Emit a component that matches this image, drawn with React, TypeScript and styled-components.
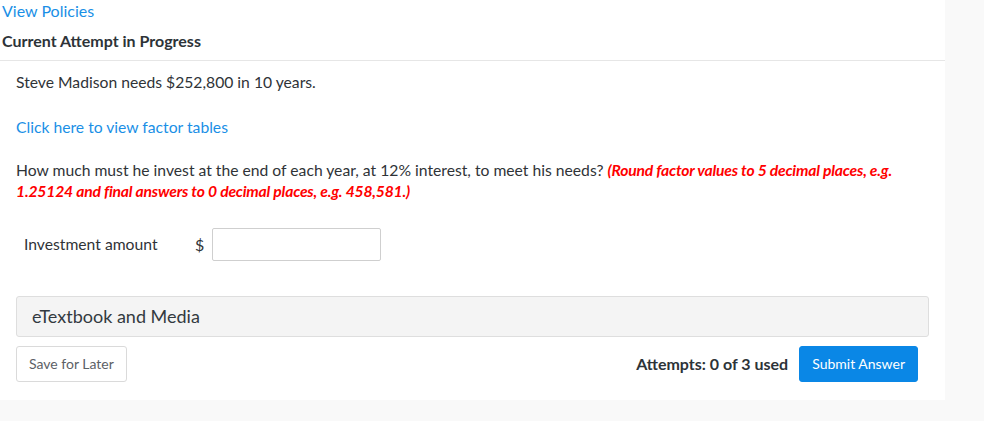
import * as React from 'react';
import styled, { createGlobalStyle } from 'styled-components';

const GlobalStyle = createGlobalStyle`
  html, body {
    margin: 0;
    padding: 0;
    background: #f9f9f9;
    font-family: Lato, "Open Sans", "Liberation Sans", sans-serif;
    color: #2f3337;
  }
`;

const Panel = styled.div`
  width: 945px;
  background: #ffffff;
  padding-bottom: 18px;
`;

const Header = styled.div`
  padding: 0 0 8px 2px;
  border-bottom: 1px solid #e6e6e6;
`;

const Link = styled.a`
  color: #1a8fe6;
  font-size: 15.7px;
  line-height: 22px;
  text-decoration: none;
  cursor: pointer;
`;

const TopLink = styled(Link)`
  display: block;
  font-size: 16px;
`;

const Heading = styled.h2`
  margin: 8px 0 0 0;
  font-size: 16px;
  font-weight: 700;
  line-height: 22px;
  color: #2d3338;
`;

const Body = styled.div`
  padding: 11px 16px 0 16px;
`;

const Para = styled.p`
  margin: 0 0 22.5px 0;
  font-size: 15.7px;
  line-height: 21px;
`;

const Hint = styled.span`
  color: #ff0000;
  font-weight: 700;
  font-style: italic;
  letter-spacing: -0.2px;
`;

const FieldRow = styled.div`
  display: flex;
  align-items: center;
  padding: 3px 0 0 8px;
  height: 33px;
`;

const Label = styled.label`
  font-size: 15.7px;
  width: 171px;
`;

const Currency = styled.span`
  font-size: 16px;
  width: 17px;
`;

const Input = styled.input`
  box-sizing: border-box;
  width: 169px;
  height: 33px;
  border: 1px solid #cfcfcf;
  border-radius: 2px;
  outline: none;
  font-family: inherit;
  font-size: 15px;
  padding: 0 8px;
`;

const MediaBar = styled.div`
  box-sizing: border-box;
  margin-top: 35px;
  height: 41px;
  display: flex;
  align-items: center;
  padding: 0 15px;
  background: #f4f4f4;
  border: 1px solid #dedede;
  border-radius: 3px;
  font-size: 18px;
  color: #333a40;
`;

const Footer = styled.div`
  display: flex;
  align-items: center;
  margin-top: 9px;
  padding-right: 11px;
`;

const Button = styled.button<{ $primary?: boolean }>`
  box-sizing: border-box;
  height: 36px;
  padding: 0 12px;
  border-radius: 3px;
  font-family: inherit;
  font-size: 14px;
  cursor: pointer;
  border: 1px solid ${(p) => (p.$primary ? '#0a87e6' : '#dadada')};
  background: ${(p) => (p.$primary ? '#0a87e6' : '#ffffff')};
  color: ${(p) => (p.$primary ? '#ffffff' : '#5c6166')};
`;

const Spacer = styled.div`
  flex: 1;
`;

const Attempts = styled.span`
  font-size: 16px;
  font-weight: 700;
  color: #2d3338;
  margin-right: 11px;
`;

export default function App() {
  return (
    <>
      <GlobalStyle />
      <Panel>
        <Header>
          <TopLink>View Policies</TopLink>
          <Heading>Current Attempt in Progress</Heading>
        </Header>
        <Body>
          <Para>Steve Madison needs $252,800 in 10 years.</Para>
          <Para>
            <Link>Click here to view factor tables</Link>
          </Para>
          <Para>
            How much must he invest at the end of each year, at 12% interest, to meet his needs?{' '}
            <Hint>
              (Round factor values to 5 decimal places, e.g. 1.25124 and final answers to 0 decimal
              places, e.g. 458,581.)
            </Hint>
          </Para>
          <FieldRow>
            <Label>Investment amount</Label>
            <Currency>$</Currency>
            <Input type="text" />
          </FieldRow>
          <MediaBar>eTextbook and Media</MediaBar>
          <Footer>
            <Button>Save for Later</Button>
            <Spacer />
            <Attempts>Attempts: 0 of 3 used</Attempts>
            <Button $primary>Submit Answer</Button>
          </Footer>
        </Body>
      </Panel>
    </>
  );
}
